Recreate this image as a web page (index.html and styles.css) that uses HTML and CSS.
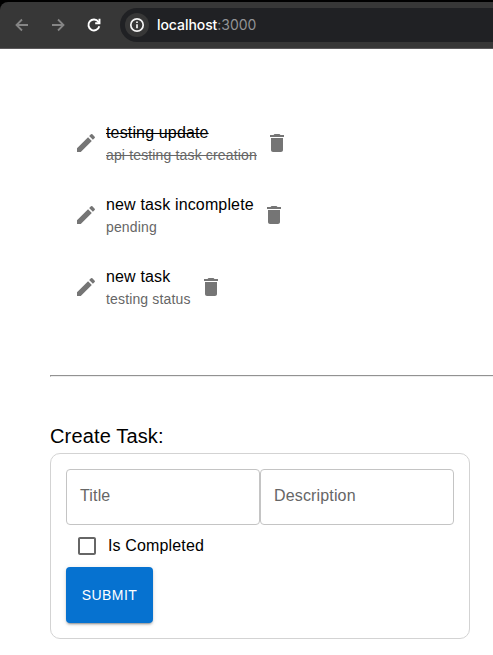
FILE: index.html
```
<!DOCTYPE html>
<html lang="en">
<head>
<meta charset="utf-8">
<title>Tasks</title>
<link rel="stylesheet" href="styles.css">
</head>
<body>
<header class="browser">
  <div class="toolbar">
    <svg class="nav" viewBox="0 0 16 16"><path d="M14 8H2.500M8 2.500 2.500 8 8 13.500"/></svg>
    <svg class="nav" viewBox="0 0 16 16"><path d="M2 8h11.500M8 2.500 13.500 8 8 13.500"/></svg>
    <svg class="nav reload" viewBox="0 0 16 16"><path d="M13.300 9.200A5.500 5.500 0 1 1 12.400 4.700L13.500 6"/><path d="M13.500 1.800V6.200H9.200"/></svg>
    <div class="address">
      <span class="info"><svg viewBox="0 0 16 16"><circle cx="8" cy="8" r="6.200"/><path d="M8 7.300v4M8 4.500v1.600"/></svg></span>
      <span class="url">localhost<span class="port">:3000</span></span>
    </div>
  </div>
</header>
<main>
  <ul class="tasks">
    <li class="task done">
      <svg class="icon" viewBox="0 0 24 24"><path d="M3 17.250V21h3.750L17.810 9.940l-3.750-3.750L3 17.250zM20.710 7.040c.39-.39.39-1.020 0-1.410l-2.340-2.340a.9959.9959 0 0 0-1.410 0l-1.830 1.830 3.750 3.750 1.830-1.830z"/></svg>
      <div class="text w-long"><span class="name">testing update</span><span class="detail">api testing task creation</span></div>
      <svg class="icon" viewBox="0 0 24 24"><path d="M6 19c0 1.100.9 2 2 2h8c1.100 0 2-.9 2-2V7H6v12zM19 4h-3.500l-1-1h-5l-1 1H5v2h14V4z"/></svg>
    </li>
    <li class="task">
      <svg class="icon" viewBox="0 0 24 24"><path d="M3 17.250V21h3.750L17.810 9.940l-3.750-3.750L3 17.250zM20.710 7.040c.39-.39.39-1.020 0-1.410l-2.340-2.340a.9959.9959 0 0 0-1.410 0l-1.830 1.830 3.750 3.750 1.830-1.830z"/></svg>
      <div class="text w-mid"><span class="name">new task incomplete</span><span class="detail">pending</span></div>
      <svg class="icon" viewBox="0 0 24 24"><path d="M6 19c0 1.100.9 2 2 2h8c1.100 0 2-.9 2-2V7H6v12zM19 4h-3.500l-1-1h-5l-1 1H5v2h14V4z"/></svg>
    </li>
    <li class="task">
      <svg class="icon" viewBox="0 0 24 24"><path d="M3 17.250V21h3.750L17.810 9.940l-3.750-3.750L3 17.250zM20.710 7.040c.39-.39.39-1.020 0-1.410l-2.340-2.340a.9959.9959 0 0 0-1.410 0l-1.830 1.830 3.750 3.750 1.830-1.830z"/></svg>
      <div class="text w-short"><span class="name">new task</span><span class="detail">testing status</span></div>
      <svg class="icon" viewBox="0 0 24 24"><path d="M6 19c0 1.100.9 2 2 2h8c1.100 0 2-.9 2-2V7H6v12zM19 4h-3.500l-1-1h-5l-1 1H5v2h14V4z"/></svg>
    </li>
  </ul>
  <hr class="divider">
  <h2 class="heading">Create Task:</h2>
  <form class="card">
    <div class="fields">
      <div class="field">Title</div>
      <div class="field">Description</div>
    </div>
    <label class="check">
      <svg class="icon" viewBox="0 0 24 24"><path d="M19 5v14H5V5h14m0-2H5c-1.100 0-2 .9-2 2v14c0 1.100.9 2 2 2h14c1.100 0 2-.9 2-2V5c0-1.100-.9-2-2-2z"/></svg>
      <span>Is Completed</span>
    </label>
    <button class="submit" type="button">SUBMIT</button>
  </form>
</main>
</body>
</html>
```
FILE: styles.css
```
* { box-sizing: border-box; }

body {
  margin: 0;
  height: 655px;
  overflow: hidden;
  background: #fff;
  color: #000;
  font-family: "Liberation Sans", Arial, sans-serif;
  font-size: 16px;
  letter-spacing: 0.15px;
}

.browser { background: #000; padding-top: 2px; }

.toolbar {
  display: flex;
  align-items: center;
  height: 47px;
  padding: 0 0 1px 14px;
  background: #373737;
  border-bottom: 1px solid #5b595b;
  border-top-left-radius: 8px;
}

.nav {
  flex: none;
  width: 16px;
  height: 16px;
  margin-right: 20px;
  fill: none;
  stroke: #858585;
  stroke-width: 1.8;
}

.nav.reload { margin-right: 18px; stroke: #fff; stroke-width: 1.9; }

.address {
  display: flex;
  align-items: center;
  flex: 1;
  height: 34px;
  padding-left: 5px;
  background: #202124;
  border-radius: 17px 0 0 17px;
}

.info {
  display: flex;
  align-items: center;
  justify-content: center;
  width: 24px;
  height: 24px;
  margin-right: 8px;
  border-radius: 50%;
  background: #373737;
}

.info svg { width: 16px; height: 16px; fill: none; stroke: #f4f4f4; stroke-width: 1.7; }

.url {
  color: #fff;
  font-family: Inter, "Liberation Sans", sans-serif;
  font-size: 14px;
  font-weight: 500;
  letter-spacing: -0.06px;
}

.port { color: #929396; font-weight: 400; }

main { padding: 58px 0 0 50px; }

.tasks {
  margin: 0;
  padding: 0 0 0 24px;
  list-style: none;
}

.task {
  display: flex;
  align-items: center;
  gap: 8px;
  height: 72px;
}

.icon { flex: none; width: 24px; height: 24px; fill: #757575; }

.text { display: flex; flex-direction: column; white-space: nowrap; }
.w-long { width: 151px; }
.w-mid { width: 148px; }
.w-short { width: 85px; }

.name { line-height: 24px; }
.detail { color: #666; font-size: 14px; line-height: 20px; }
.done .name, .done .detail { text-decoration: line-through; }

.divider {
  height: 2px;
  margin: 52px 0 47px;
  border: 0;
  border-top: 1px solid #929292;
  border-left: 1px solid #929292;
  border-bottom: 1px solid #eee;
}

.heading {
  margin: 0;
  font-size: 20px;
  font-weight: 400;
  line-height: 24px;
}

.card {
  width: 420px;
  height: 186px;
  margin-top: 5px;
  padding: 15px;
  border: 1px solid #d3d3d3;
  border-radius: 10px;
}

.fields { display: flex; }

.field {
  flex: 1;
  height: 56px;
  padding: 0 13px;
  border: 1px solid #c4c4c4;
  border-radius: 4px;
  color: #666;
  line-height: 51px;
}

.check {
  display: flex;
  align-items: center;
  gap: 9px;
  height: 42px;
  padding-left: 9px;
}

.check .icon { fill: #666; }

.submit {
  display: block;
  width: 87px;
  height: 56px;
  padding: 0;
  border: 0;
  border-radius: 4px;
  background: #0672d0;
  box-shadow: 0 3px 1px -2px rgba(0,0,0,.2), 0 2px 2px rgba(0,0,0,.14), 0 1px 5px rgba(0,0,0,.12);
  color: #fff;
  font: 400 14px "Liberation Sans", sans-serif;
  letter-spacing: 0.4px;
}
```
